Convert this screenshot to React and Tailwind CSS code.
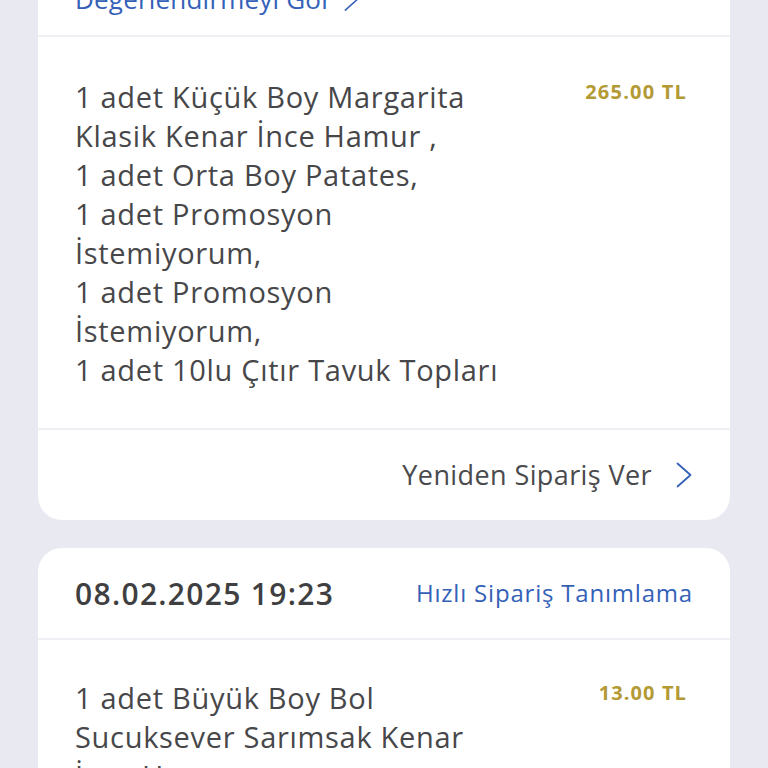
const firstItems = [
  '1 adet Küçük Boy Margarita',
  'Klasik Kenar İnce Hamur ,',
  '1 adet Orta Boy Patates,',
  '1 adet Promosyon',
  'İstemiyorum,',
  '1 adet Promosyon',
  'İstemiyorum,',
  '1 adet 10lu Çıtır Tavuk Topları',
];

const secondItems = ['1 adet Büyük Boy Bol', 'Sucuksever Sarımsak Kenar', 'İnce Hamur ,'];

// thin tall chevron like the iOS one
function Chevron({ className }) {
  return (
    <svg viewBox="0 0 16 26" className={className} fill="none" stroke="currentColor" strokeWidth="1.8" strokeLinecap="round" strokeLinejoin="round">
      <polyline points="1.5,1.5 14.5,13 1.5,24.5" />
    </svg>
  );
}

function ItemLines({ lines }) {
  return (
    <div className="text-[29px] leading-[39px] tracking-[0.7px] text-[#47474a]">
      {lines.map((l, i) => (
        <p key={i} className="whitespace-nowrap">{l}</p>
      ))}
    </div>
  );
}

export default function App() {
  return (
    <div
      className="h-[768px] w-[768px] overflow-hidden bg-[#e9e9f1] px-[38px]"
      style={{ fontFamily: '"Open Sans", Lato, sans-serif' }}
    >
      <div className="-mt-[40px] flex flex-col gap-[28px]">
        {/* previous order, top cut off */}
        <div className="rounded-b-[24px] bg-white">
          <div className="flex h-[77px] items-center border-b-2 border-[#f0f0f4] px-[37px] pt-[4px]">
            <span className="flex items-center gap-[12px] text-[26px] tracking-[0.2px] text-[#3461b8]">
              Değerlendirmeyi Gör
              <Chevron className="h-[24px] w-[14px]" />
            </span>
          </div>
          <div className="flex justify-between px-[37px] pb-[39px] pt-[40px]">
            <ItemLines lines={firstItems} />
            <span className="pr-[6px] text-[20px] font-bold tracking-[1.2px] text-[#b39a35]">265.00 TL</span>
          </div>
          <div className="flex h-[92px] items-center justify-end gap-[24px] border-t-2 border-[#f0f0f4] px-[38px]">
            <span className="text-[27px] tracking-[0.4px] text-[#4a4a4d]">Yeniden Sipariş Ver</span>
            <Chevron className="h-[26px] w-[16px] text-[#3461b8]" />
          </div>
        </div>

        {/* next order */}
        <div className="rounded-[24px] bg-white">
          <div className="flex h-[92px] items-center justify-between border-b-2 border-[#f0f0f4] px-[37px]">
            <span className="text-[30px] font-semibold tracking-[1.3px] text-[#3f3f42]">08.02.2025 19:23</span>
            <span className="text-[24px] tracking-[0.8px] text-[#3461b8]">Hızlı Sipariş Tanımlama</span>
          </div>
          <div className="flex justify-between px-[37px] pt-[38px]">
            <ItemLines lines={secondItems} />
            <span className="pr-[6px] text-[20px] font-bold tracking-[1.1px] text-[#b39a35]">13.00 TL</span>
          </div>
        </div>
      </div>
    </div>
  );
}
